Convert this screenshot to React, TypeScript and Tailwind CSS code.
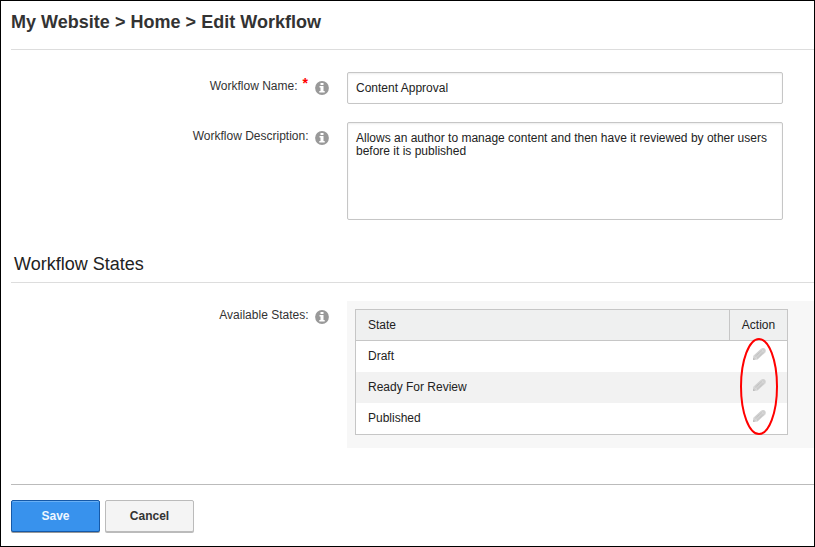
import React from "react";

function InfoIcon() {
  return (
    <svg className="block h-[14px] w-[14px] shrink-0" viewBox="0 0 14 14">
      <circle cx="7" cy="7" r="6.9" fill="#999" />
      <path d="M5.5 1.9h3v2.2h-3zM4.5 5.1h4v4.8h1.2v1.7H4.3V9.9h1.2V6.6h-1z" fill="#fff" />
    </svg>
  );
}

function PencilIcon() {
  return (
    <svg className="block h-[12px] w-[13px]" viewBox="0 0 13 12">
      <path d="M0 12 .4 7.7 8 .8Q10-.5 11.8.5 13.4 2.3 12.3 4.4L4.6 11.4z" fill="#d0d0d0" />
      <path d="M1.2 7.8 4.3 10.9M8 1.4l3.5 3.5" stroke="#e8e8e8" strokeWidth=".6" fill="none" />
      <path d="M2.6 8.1 8.4 2.7M4.5 9.9 10.3 4.5" stroke="#b4b4b4" strokeWidth=".8" strokeDasharray="1 .8" fill="none" />
      <path d="M0 12 .2 9.8 2 11.5z" fill="#bbb" />
    </svg>
  );
}

const states = ["Draft", "Ready For Review", "Published"];

export default function App() {
  return (
    <div className="flex h-[547px] w-[815px] flex-col overflow-hidden border border-black bg-white pl-[10px] font-['Liberation_Sans',Arial,sans-serif] text-[12px] leading-[14px] text-[#333]">
      <h1 className="h-[49px] shrink-0 border-b border-[#ddd] pt-[11px] text-[18px] font-bold leading-[20px] tracking-[0.02px] whitespace-nowrap">
        <span>My Website &gt; Home &gt; Edit Workflow</span>
      </h1>

      <div className="mt-[22px] flex h-[32px] shrink-0">
        <div className="flex w-[318px] justify-end pt-[7px]">
          <span>Workflow Name:</span>
          <span className="-mt-[3px] ml-[5px] text-[14px] font-bold text-[#f00]">*</span>
          <span className="ml-[7px] pt-[1.5px]"><InfoIcon /></span>
        </div>
        <input
          readOnly
          value="Content Approval"
          className="ml-[18px] h-[32px] w-[436px] rounded-[2px] border border-[#c6c6c6] px-[8px] text-[#222] shadow-[inset_0_1px_2px_rgba(0,0,0,0.08)] outline-none"
        />
      </div>

      <div className="mt-[18px] flex h-[98px] shrink-0">
        <div className="flex w-[318px] justify-end pt-[7px]">
          <span>Workflow Description:</span>
          <span className="ml-[6.5px] pt-[1.5px]"><InfoIcon /></span>
        </div>
        <textarea
          readOnly
          value="Allows an author to manage content and then have it reviewed by other users before it is published"
          className="ml-[18px] block h-[98px] w-[436px] resize-none overflow-hidden rounded-[2px] border border-[#c6c6c6] px-[8px] py-[9px] leading-[13px] text-[#222] shadow-[inset_0_1px_2px_rgba(0,0,0,0.08)] outline-none"
        />
      </div>

      <h2 className="mt-[33px] h-[30px] shrink-0 border-b border-[#ddd] pl-[3px] pt-px text-[18px] leading-[20px] text-[#222]">
        <span>Workflow States</span>
      </h2>

      <div className="mt-[18px] flex h-[147px] shrink-0">
        <div className="flex w-[318px] justify-end pt-[7px]">
          <span>Available States:</span>
          <span className="ml-[6.5px] pt-[1.5px]"><InfoIcon /></span>
        </div>
        <div className="ml-[18px] flex-1 bg-[#f7f7f7] pl-[8px] pt-[8px]">
          <div className="relative w-[433px] border border-[#c6c6c6] bg-white text-[#222]">
            <div className="flex h-[31px] border-b border-[#c6c6c6] bg-[#eff0f0] leading-[30px]">
              <div className="w-[374px] border-r border-[#c6c6c6] pl-[12px]">State</div>
              <div className="flex-1 text-center">Action</div>
            </div>
            {states.map((name) => (
              <div key={name} className="flex h-[31px] leading-[30px] even:bg-white odd:bg-[#f2f2f2]">
                <div className="w-[374px] pl-[12px]">{name}</div>
                <div className="flex flex-1 justify-center pl-px pt-[7px]"><PencilIcon /></div>
              </div>
            ))}
            <svg className="absolute left-[383px] top-[27px] h-[100px] w-[41px]" viewBox="0 0 41 100">
              <ellipse cx="20" cy="49.5" rx="18" ry="47.5" fill="none" stroke="#f00" strokeWidth="2" />
            </svg>
          </div>
        </div>
      </div>

      <div className="mt-[36px] flex h-[62px] shrink-0 gap-[5px] border-t border-[#bbb] pt-[15px] text-[12px] font-bold">
        <button className="h-[32px] w-[89px] rounded-[2px] border border-[#1559a8] bg-[#3892ed] text-[#eef6ff] shadow-[inset_0_1px_0_#69b0f5,0_1px_0_#999]">Save</button>
        <button className="h-[32px] w-[89px] rounded-[2px] border border-[#bbb] bg-[#f4f4f4] text-[#333] shadow-[0_1px_0_#bbb]">Cancel</button>
      </div>
    </div>
  );
}
